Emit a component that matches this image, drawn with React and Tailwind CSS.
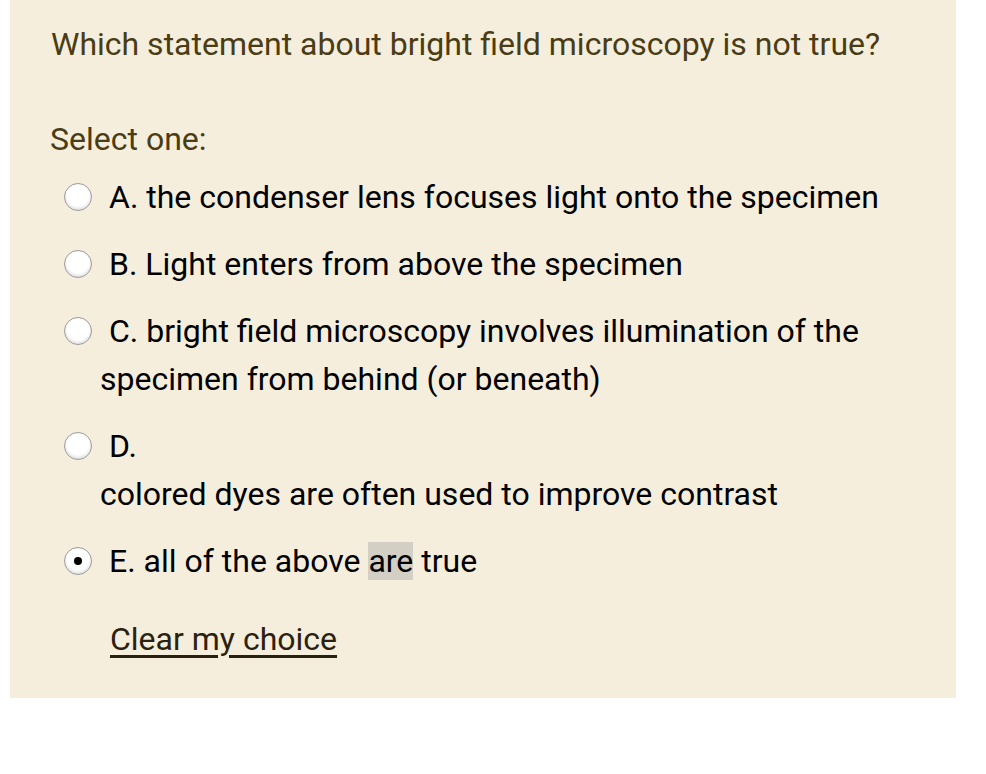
import React, { useState } from 'react';

const options = [
  { id: 'a', label: 'A. the condenser lens focuses light onto the specimen' },
  { id: 'b', label: 'B. Light enters from above the specimen' },
  { id: 'c', label: 'C. bright field microscopy involves illumination of the specimen from behind (or beneath)' },
  { id: 'd', label: 'D.', extra: 'colored dyes are often used to improve contrast' },
  { id: 'e', label: 'E. all of the above', hl: 'are', tail: ' true' },
];

const Radio = ({ checked }) => (
  <span className="absolute left-[-36px] top-[10px] w-[28px] h-[28px] rounded-full bg-white border border-[#9a9a9a] shadow-[inset_0_-2px_3px_rgba(0,0,0,0.12)] flex items-center justify-center">
    {checked && <span className="w-[8px] h-[8px] rounded-full bg-black" />}
  </span>
);

export default function App() {
  const [choice, setChoice] = useState('e');

  return (
    <div className="w-[986px] h-[774px] bg-white font-['Roboto',sans-serif]">
      <div className="ml-[10px] w-[946px] h-[698px] bg-[#f5eedc] pt-[22px]">
        <p className="pl-[41px] text-[32px] leading-[44px] text-[#4a3c14]">
          Which statement about bright field microscopy is not true?
        </p>
        <p className="pl-[40px] mt-[51px] text-[32px] leading-[44px] text-[#4a3c14]">Select one:</p>
        <div className="mt-[12px] flex flex-col gap-[19px] text-[32px] leading-[48px] text-black">
          {options.map((o) => (
            <div
              key={o.id}
              className="relative ml-[90px] mr-[40px] cursor-pointer"
              onClick={() => setChoice(o.id)}
            >
              <Radio checked={choice === o.id} />
              <div className="indent-[9px]">
                {o.label}
                {o.hl && ' '}
                {o.hl && <span className="bg-[#d3cfc5]">{o.hl}</span>}
                {o.tail}
              </div>
              {o.extra && <div>{o.extra}</div>}
            </div>
          ))}
        </div>
        <button
          className="ml-[100px] mt-[34px] text-[32px] leading-[40px] text-[#2b2110] underline underline-offset-[5px]"
          onClick={() => setChoice(null)}
        >
          Clear my choice
        </button>
      </div>
    </div>
  );
}
